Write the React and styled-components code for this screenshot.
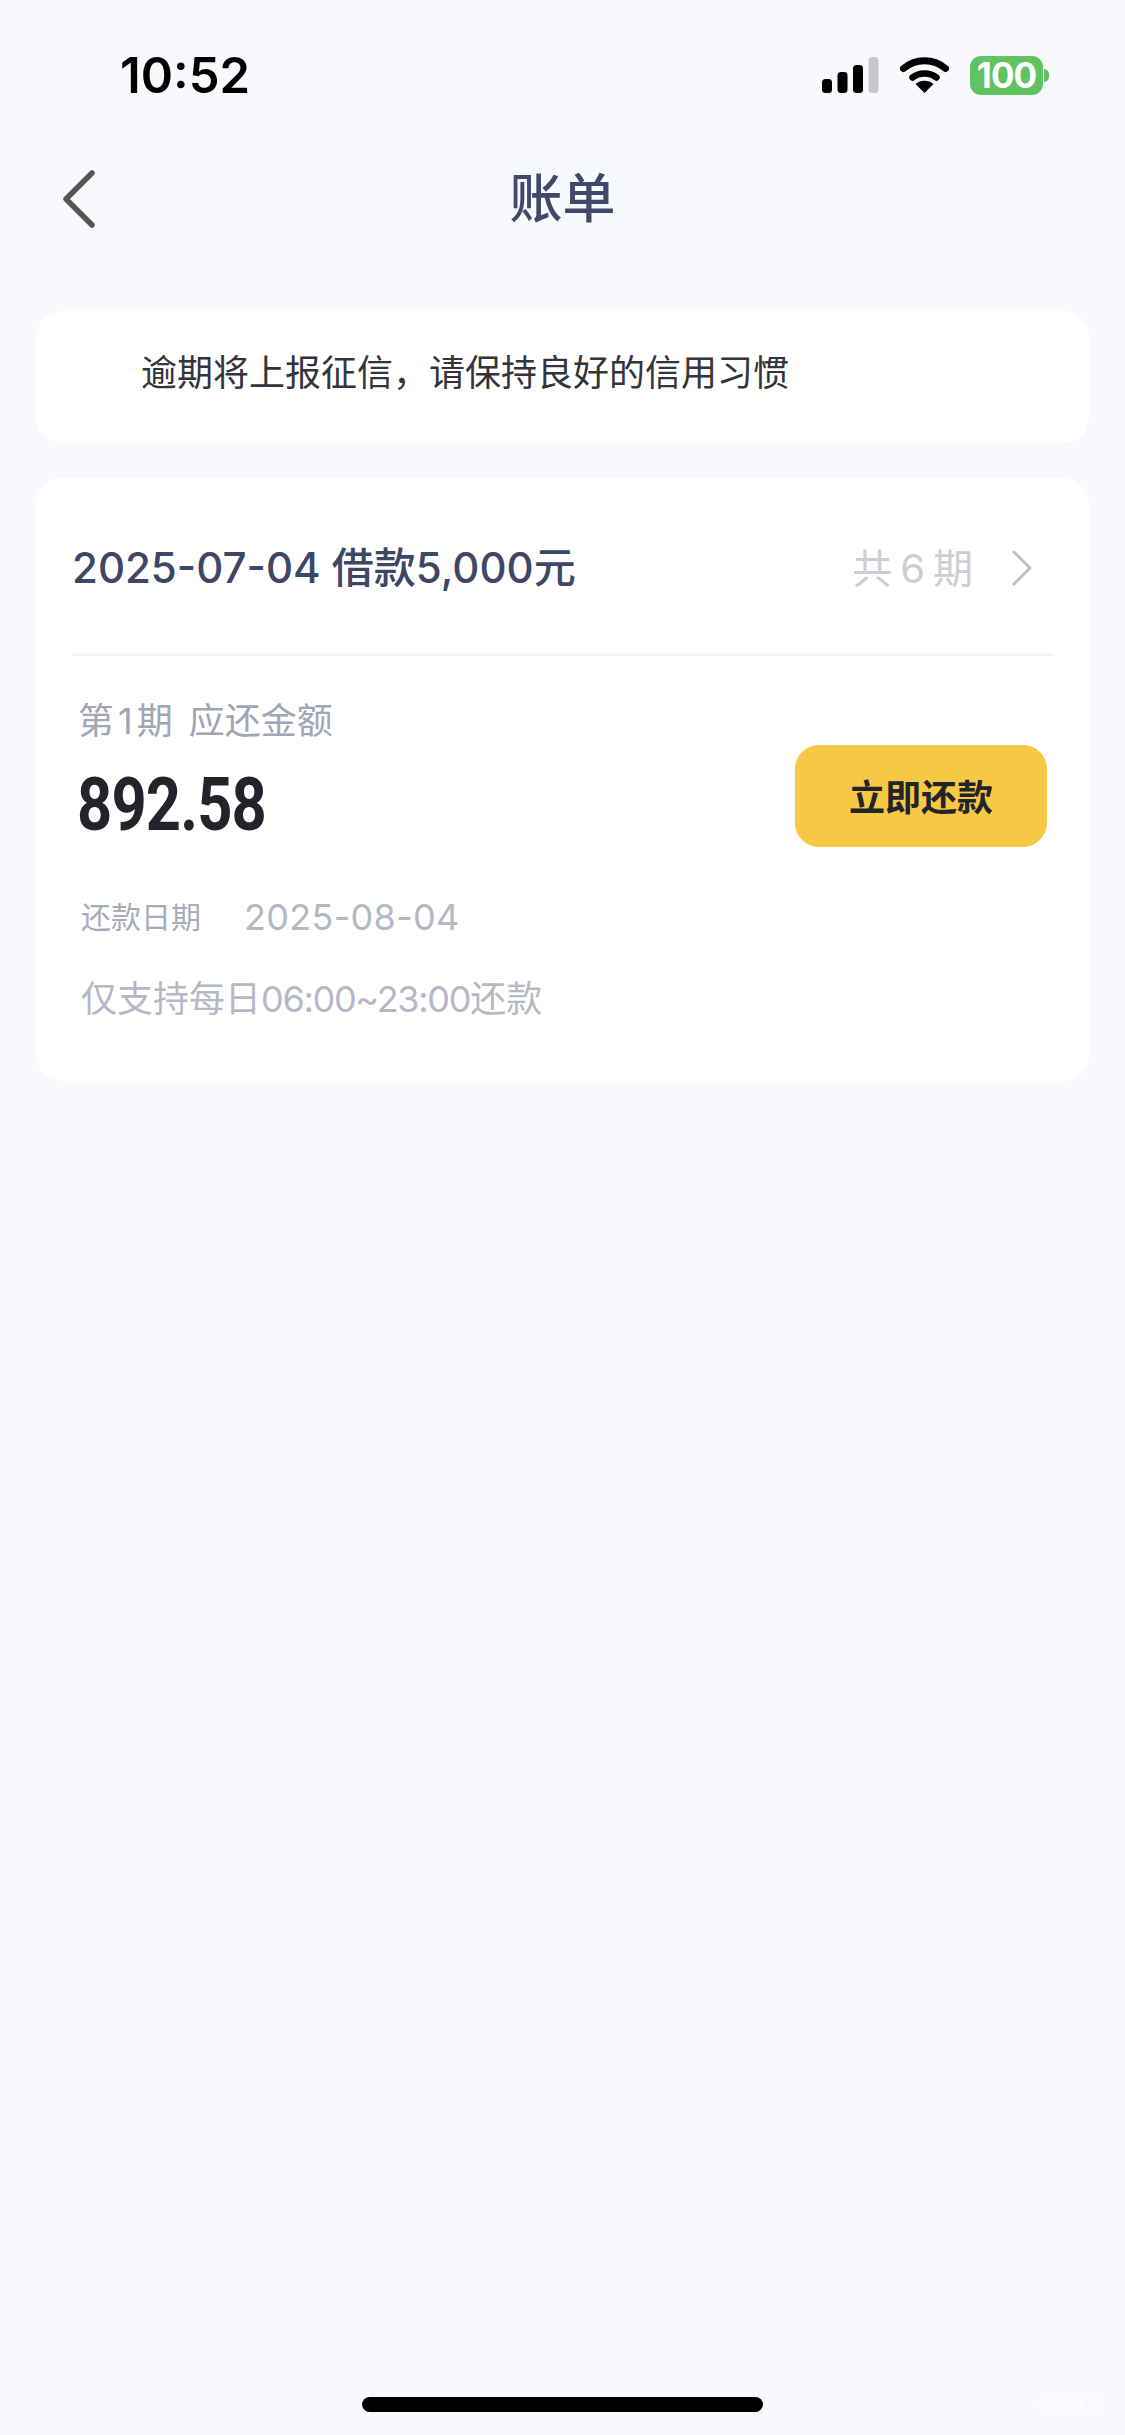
import React from "react";
import styled, { createGlobalStyle } from "styled-components";

const Global = createGlobalStyle`
  html, body { margin: 0; padding: 0; background: #f8f9fd; }
  body { font-family: "Inter", "Noto Sans CJK SC", sans-serif; }
  * { box-sizing: border-box; }
`;
const Page = styled.div`
  position: relative;
  width: 1125px;
  height: 2435px;
  overflow: hidden;
  background: #f8f9fd;
  display: flex;
  flex-direction: column;
`;
const StatusBar = styled.div`
  height: 150px;
  padding: 0 76px 0 120px;
  display: flex;
  align-items: center;
  justify-content: space-between;
`;
const Time = styled.div`
  font-size: 49px;
  font-weight: 600;
  line-height: 1;
  color: #000;
`;
const StatusIcons = styled.div`
  display: flex;
  align-items: center;
  gap: 21px;
`;
const NavBar = styled.div`
  position: relative;
  height: 94px;
  display: flex;
  align-items: center;
  justify-content: center;
`;
const Back = styled.svg`
  position: absolute;
  left: 60px;
  top: 18px;
`;
const Title = styled.div`
  margin-top: 5px;
  font-size: 53px;
  font-weight: 500;
  line-height: 1;
  color: #41496a;
`;
const Content = styled.div`
  margin-top: 67px;
  padding: 0 36px;
  display: flex;
  flex-direction: column;
  gap: 35px;
`;
const Card = styled.div`
  background: #fff;
  border-radius: 26px;
`;
const Notice = styled(Card)`
  height: 132px;
  padding: 0 0 14px 105px;
  display: flex;
  align-items: center;
  font-size: 36px;
  color: #33343c;
`;
const LoanCard = styled(Card)`
  height: 603px;
  padding: 0 36px;
`;
const LoanHeader = styled.div`
  height: 178px;
  padding-top: 4px;
  display: flex;
  align-items: center;
  justify-content: space-between;
  border-bottom: 3px solid #f3f4f8;
`;
const LoanTitle = styled.div`
  font-size: 42px;
  font-weight: 500;
  color: #3f4766;
  line-height: 1;
`;
const Periods = styled.div`
  display: flex;
  align-items: center;
  gap: 38px;
  padding-right: 20px;
  font-size: 40px;
  color: #cdced3;
  line-height: 1;
`;
const PeriodLabel = styled.span`
  padding-top: 2px;
`;
const PeriodNum = styled.span`
  margin: 0 8px;
`;
const DueRow = styled.div`
  display: flex;
  justify-content: space-between;
  align-items: flex-start;
  padding: 43px 6px 0 6px;
`;
const DueLabel = styled.div`
  font-size: 36px;
  line-height: 44px;
  word-spacing: 6px;
  color: #a2a5b5;
`;
const DueNum = styled.span`
  margin: 0 4px;
`;
const Amount = styled.div`
  margin: 25px 0 0 -1px;
  font-family: "Roboto", sans-serif;
  font-size: 74px;
  font-weight: 700;
  line-height: 74px;
  letter-spacing: -1px;
  color: #23232b;
  transform: scaleX(0.83);
  transform-origin: left center;
`;
const PayButton = styled.div`
  width: 252px;
  height: 102px;
  margin-top: 46px;
  padding-bottom: 2px;
  border-radius: 24px;
  background: #f7c844;
  display: flex;
  align-items: center;
  justify-content: center;
  font-size: 36px;
  font-weight: 700;
  color: #23232b;
`;
const DateRow = styled.div`
  margin-top: 48px;
  padding-left: 9px;
  display: flex;
  align-items: center;
  gap: 43px;
  height: 44px;
  line-height: 44px;
`;
const DateLabel = styled.span`
  font-size: 30px;
  color: #a8abba;
`;
const DateValue = styled.span`
  font-size: 36px;
  letter-spacing: 0.3px;
  color: #b4b7c6;
`;
const Hint = styled.div`
  margin-top: 38px;
  padding-left: 9px;
  font-size: 36px;
  line-height: 44px;
  color: #b6b8c7;
`;
const HintTime = styled.span`
  letter-spacing: -1.3px;
`;
const HomeBar = styled.div`
  position: absolute;
  left: 362px;
  top: 2397px;
  width: 401px;
  height: 15px;
  border-radius: 8px;
  background: #000;
`;
const Watermark = styled.div`
  position: absolute;
  right: 20px;
  top: 2394px;
  font-size: 18px;
  line-height: 22px;
  color: rgba(255, 255, 255, 0.8);
`;
const Battery = styled.div`
  position: relative;
  width: 73px;
  height: 39px;
  margin-right: 6px;
  border-radius: 11px;
  background: #5fc361;
  color: #fff;
  display: flex;
  align-items: center;
  justify-content: center;
  font-size: 35px;
  font-weight: 700;
  line-height: 1;
  letter-spacing: -1px;
  &::after {
    content: "";
    position: absolute;
    right: -6px;
    top: 13px;
    width: 5px;
    height: 13px;
    border-radius: 0 6px 6px 0;
    background: #5fc361;
  }
`;

export default function App() {
  return (
    <Page>
      <Global />
      <StatusBar>
        <Time>10:52</Time>
        <StatusIcons>
          <svg width="57" height="36" viewBox="0 0 57 36">
            <rect x="0" y="22" width="10" height="14" rx="3.5" fill="#000" />
            <rect x="15.5" y="15" width="10" height="21" rx="3.5" fill="#000" />
            <rect x="31" y="8" width="10" height="28" rx="3.5" fill="#000" />
            <rect x="46.5" y="0" width="10" height="36" rx="3.5" fill="#c6c7cc" />
          </svg>
          <svg width="49" height="36" viewBox="0 0 49 36">
            <path d="M3.5 11.5C15 1 34 1 45.5 11.5" fill="none" stroke="#000" strokeWidth="7" strokeLinecap="round" />
            <path d="M12.5 20.5C19 15 30 15 36.5 20.5" fill="none" stroke="#000" strokeWidth="6.5" strokeLinecap="round" />
            <path d="M24.5 36L15.5 27C20 22.5 29 22.5 33.5 27Z" fill="#000" />
          </svg>
          <Battery>100</Battery>
        </StatusIcons>
      </StatusBar>
      <NavBar>
        <Back width="38" height="62" viewBox="0 0 38 62">
          <path d="M32 5L6 31L32 57" fill="none" stroke="#555" strokeWidth="5.5" strokeLinecap="round" strokeLinejoin="round" />
        </Back>
        <Title>账单</Title>
      </NavBar>
      <Content>
        <Notice>逾期将上报征信，请保持良好的信用习惯</Notice>
        <LoanCard>
          <LoanHeader>
            <LoanTitle>2025-07-04 借款5,000元</LoanTitle>
            <Periods>
              <PeriodLabel>共<PeriodNum>6</PeriodNum>期</PeriodLabel>
              <svg width="22" height="36" viewBox="0 0 22 36">
                <path d="M3 2L19 18L3 34" fill="none" stroke="#bfc0c6" strokeWidth="3" strokeLinecap="round" strokeLinejoin="round" />
              </svg>
            </Periods>
          </LoanHeader>
          <DueRow>
            <div>
              <DueLabel>第<DueNum>1</DueNum>期 应还金额</DueLabel>
              <Amount>892.58</Amount>
            </div>
            <PayButton>立即还款</PayButton>
          </DueRow>
          <DateRow>
            <DateLabel>还款日期</DateLabel>
            <DateValue>2025-08-04</DateValue>
          </DateRow>
          <Hint>仅支持每日<HintTime>06:00~23:00</HintTime>还款</Hint>
        </LoanCard>
      </Content>
      <HomeBar />
      <Watermark>卡农社区</Watermark>
    </Page>
  );
}
